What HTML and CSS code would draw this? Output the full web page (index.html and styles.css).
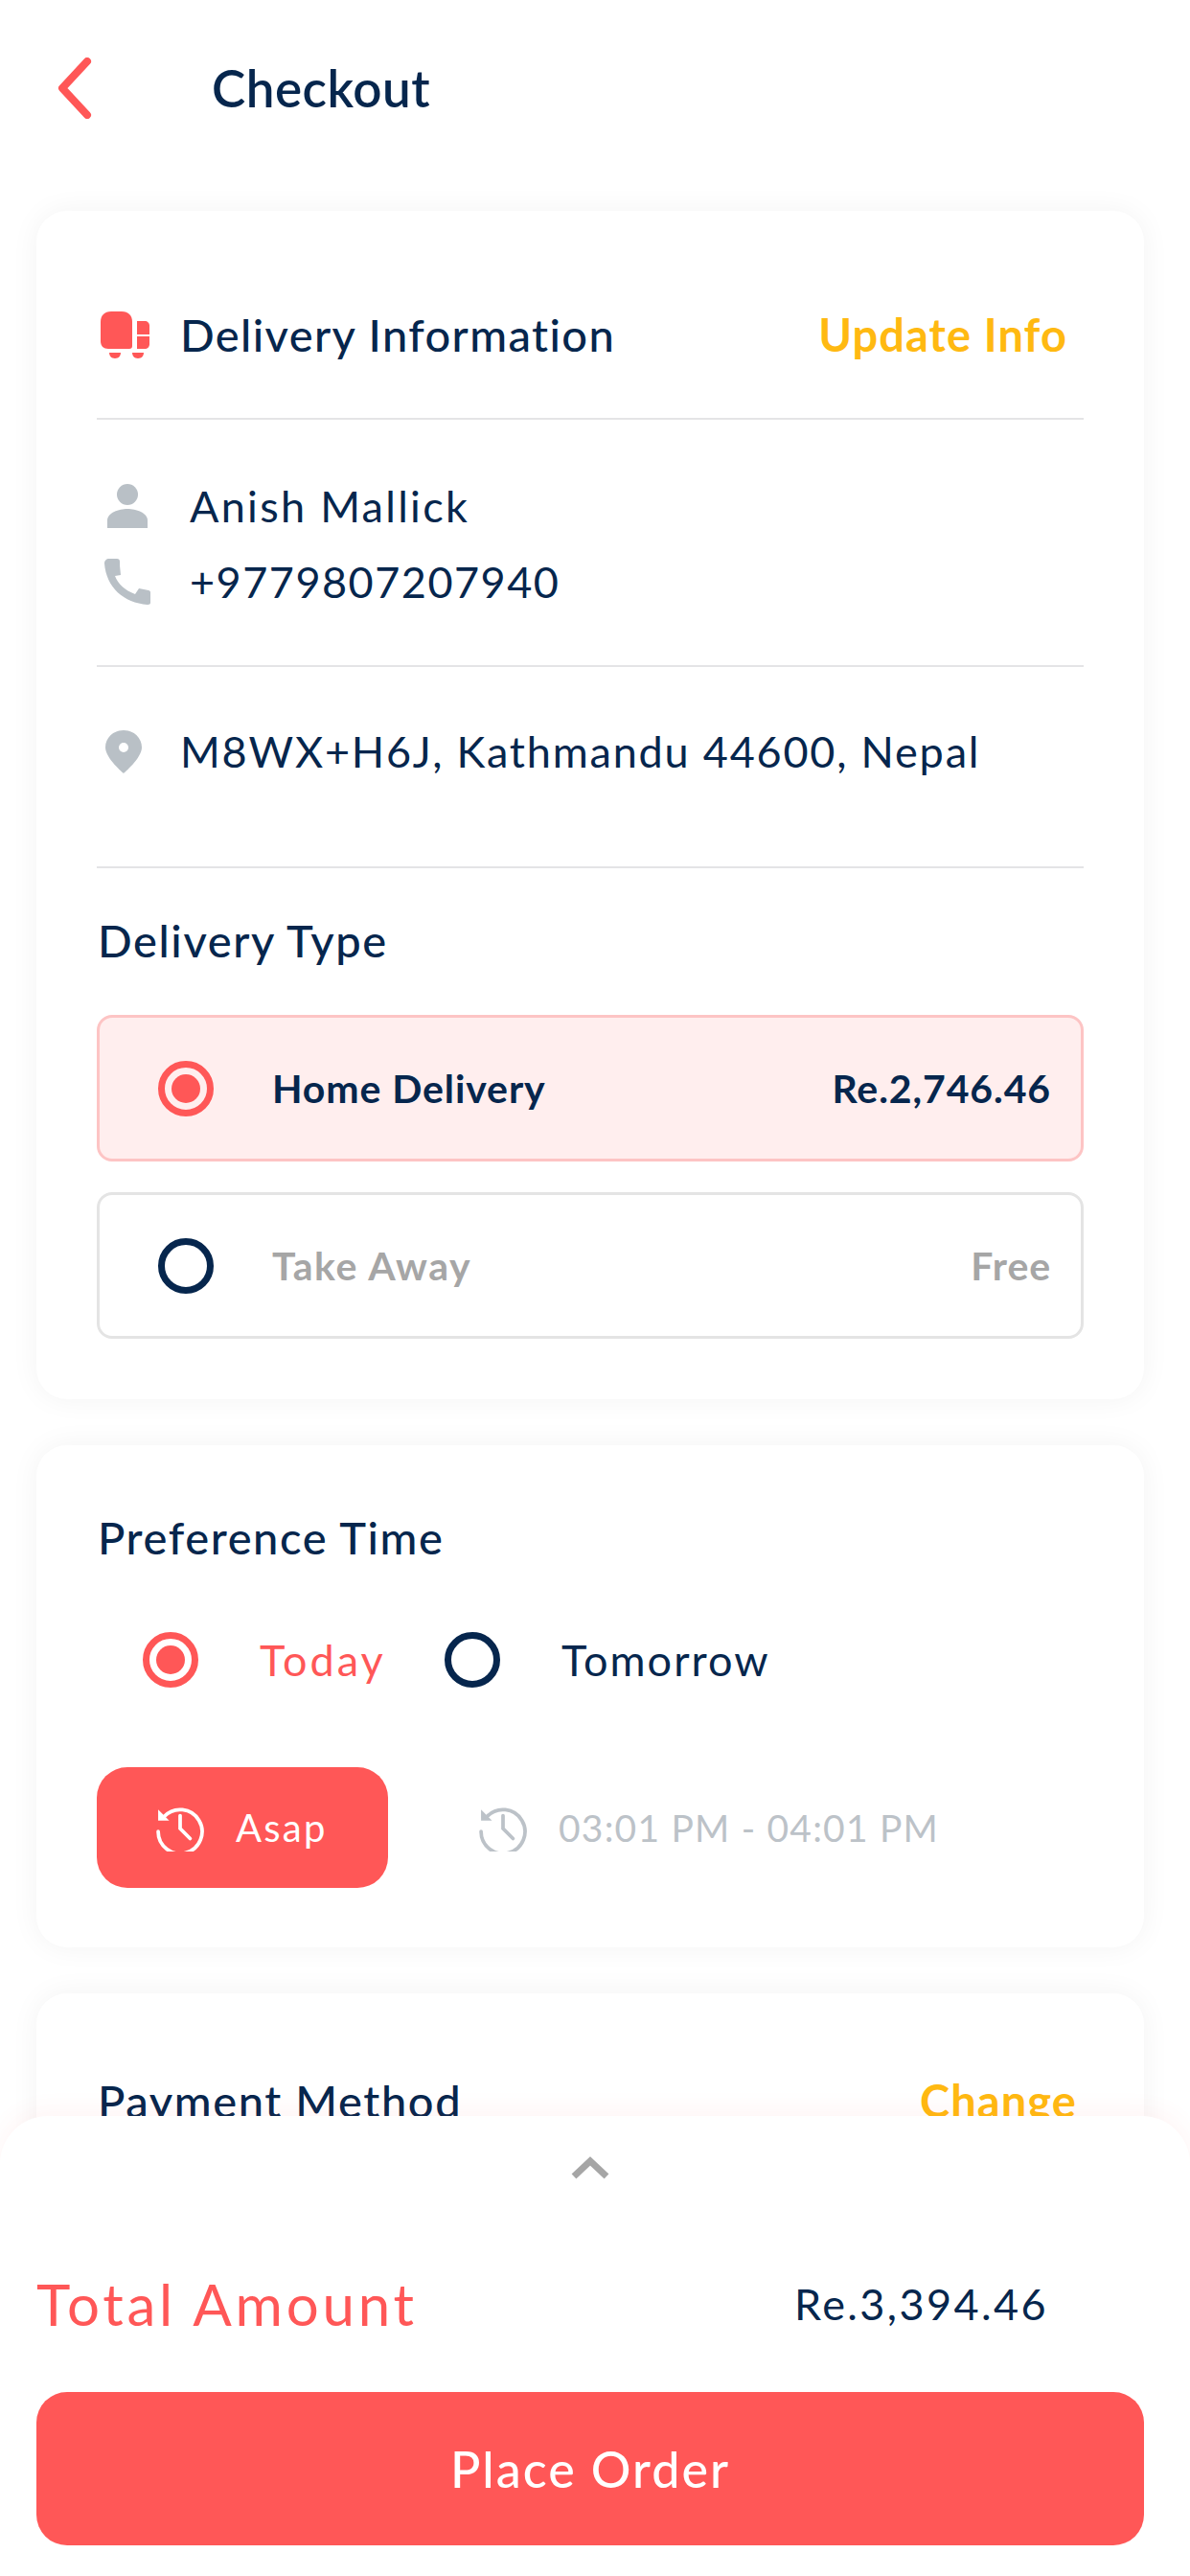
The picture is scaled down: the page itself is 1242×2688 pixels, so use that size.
FILE: index.html
```html
<!DOCTYPE html>
<html lang="en">
<head>
    <meta charset="UTF-8">
    <meta name="viewport" content="width=device-width, initial-scale=1.0">
    <title>Checkout</title>
    <link rel="stylesheet" href="styles.css">
</head>
<body>
    <div class="screen">
        <header class="top-bar">
            <svg class="back-icon" viewBox="0 0 36 64"><path d="M31 4 5 32l26 28" /></svg>
            <h1>Checkout</h1>
        </header>

        <section class="card card-delivery">
            <div class="info-head">
                <svg class="truck-icon" viewBox="0 0 51 49">
                    <path d="M11 0h11c7 0 11 4 11 11v25c0 2-1 3-3 3H8c-5 0-8-3-8-8V11C0 4 4 0 11 0z" />
                    <path d="M38 10h8c3 0 5 2 5 5v9H38z" />
                    <path d="M38 26h13v8c0 3-2 5-5 5h-8z" />
                    <path d="M9 43h12c0 3-2 6-6 6s-6-3-6-6zM33 43h12c0 3-2 6-6 6s-6-3-6-6z" />
                </svg>
                <h2 class="info-title">Delivery Information</h2>
                <a class="link-gold">Update Info</a>
            </div>

            <div class="contact">
                <div class="contact-row">
                    <svg class="gray-icon" viewBox="0 0 48 48">
                        <circle cx="24" cy="12" r="11" />
                        <path d="M3 47v-8c0-8 12-12 21-12s21 4 21 12v8z" />
                    </svg>
                    <span class="contact-name">Anish Mallick</span>
                </div>
                <div class="contact-row">
                    <svg class="gray-icon" viewBox="0 0 48 48">
                        <path d="M0 5c0-3 2-5 5-5h8c2 0 3 1 3 3v4l1 10-6 1c3 8 10 15 21 19l4-6 10 2c1 0 2 1 2 2v11c0 1-1 2-3 2C20 46 2 30 0 5z" />
                    </svg>
                    <span>+9779807207940</span>
                </div>
            </div>

            <div class="address">
                <svg class="pin-icon" viewBox="0 0 38 45">
                    <path fill-rule="evenodd" d="M19 0C8 0 0 8 0 18c0 11 19 27 19 27s19-16 19-27C38 8 30 0 19 0zm0 13a5 5 0 1 1 0 10 5 5 0 0 1 0-10z" />
                </svg>
                <span>M8WX+H6J, Kathmandu 44600, Nepal</span>
            </div>

            <div class="delivery-type">
                <h3 class="section-title">Delivery Type</h3>
                <div class="type-option selected">
                    <span class="radio on"></span>
                    <span class="type-name">Home Delivery</span>
                    <span class="type-price">Re.2,746.46</span>
                </div>
                <div class="type-option">
                    <span class="radio"></span>
                    <span class="type-name">Take Away</span>
                    <span class="type-price">Free</span>
                </div>
            </div>
        </section>

        <section class="card card-time">
            <h3 class="section-title">Preference Time</h3>
            <div class="day-row">
                <span class="radio on"></span>
                <span class="day-name active">Today</span>
                <span class="radio"></span>
                <span class="day-name">Tomorrow</span>
            </div>
            <div class="slot-row">
                <div class="asap-button">
                    <svg class="clock-icon" viewBox="0 0 48 48">
                        <path d="M2 28A22 22 0 1 0 8 13" />
                        <path class="clock-head" d="M2 6v11h11z" />
                        <path d="M24 12v13l10 10" />
                    </svg>
                    <span>Asap</span>
                </div>
                <div class="time-slot">
                    <svg class="clock-icon" viewBox="0 0 48 48">
                        <path d="M2 28A22 22 0 1 0 8 13" />
                        <path class="clock-head" d="M2 6v11h11z" />
                        <path d="M24 12v13l10 10" />
                    </svg>
                    <span>03:01 PM - 04:01 PM</span>
                </div>
            </div>
        </section>

        <section class="card card-payment">
            <div class="payment-head">
                <h3 class="section-title">Payment Method</h3>
                <a class="link-gold">Change</a>
            </div>
        </section>

        <!-- sheet sits over the scrolled content -->
        <div class="bottom-sheet">
            <svg class="sheet-arrow" viewBox="0 0 40 24"><path d="M3 21 20 5l17 16" /></svg>
            <div class="total-row">
                <span class="total-label">Total Amount</span>
                <span class="total-value">Re.3,394.46</span>
            </div>
            <button class="place-order">Place Order</button>
        </div>
    </div>
</body>
</html>
```

FILE: styles.css
```css
* {
    box-sizing: border-box;
}

body {
    margin: 0;
    background-color: #fff;
    font-family: "Lato", "Open Sans", sans-serif;
    color: #06264d;
}

h1, h2, h3 {
    margin: 0;
    font-weight: 500;
}

.screen {
    position: relative;
    width: 1242px;
    height: 2688px;
    padding: 0 48px 0 38px;
    overflow: hidden;
}

.top-bar {
    display: flex;
    align-items: center;
    height: 220px;
    padding: 0 0 37px 22px;
}

.back-icon {
    width: 36px;
    height: 64px;
    fill: none;
    stroke: #ff5757;
    stroke-width: 8;
    stroke-linecap: round;
    stroke-linejoin: round;
}

h1 {
    margin-left: 125px;
    font-size: 53px;
    font-weight: 600;
    letter-spacing: 0.5px;
}

.card {
    margin-bottom: 48px;
    padding: 0 63px;
    background-color: #fff;
    border-radius: 32px;
    box-shadow: 0 0 30px rgba(0, 0, 0, 0.05);
}

.card-delivery {
    height: 1240px;
}

.info-head {
    display: flex;
    align-items: center;
    height: 218px;
    padding: 42px 17px 0 4px;
    border-bottom: 2px solid #e4e4e6;
}

.truck-icon {
    width: 51px;
    height: 49px;
    fill: #ff5757;
}

.info-title {
    margin-left: 32px;
    font-size: 47px;
    letter-spacing: 1.4px;
}

.link-gold {
    margin-left: auto;
    font-size: 47px;
    font-weight: 700;
    letter-spacing: 1.1px;
    color: #ffb911;
}

.contact {
    height: 258px;
    padding-top: 50px;
    border-bottom: 2px solid #e4e4e6;
}

.contact-row {
    display: flex;
    align-items: center;
    height: 79px;
    padding-left: 8px;
    font-size: 45px;
    letter-spacing: 1.5px;
}

.contact-row span {
    margin-left: 41px;
}

.contact-row .contact-name {
    letter-spacing: 2.3px;
}

.gray-icon {
    width: 48px;
    height: 48px;
    fill: #b9c0c6;
}

.address {
    display: flex;
    align-items: center;
    height: 210px;
    padding: 0 0 32px 9px;
    border-bottom: 2px solid #e4e4e6;
    font-size: 45px;
    letter-spacing: 1.8px;
}

.address span {
    margin-left: 40px;
}

.pin-icon {
    width: 38px;
    height: 45px;
    fill: #b9c0c6;
}

.delivery-type {
    padding-top: 50px;
}

.section-title {
    padding-left: 1px;
    font-size: 47px;
    letter-spacing: 1.6px;
    line-height: 50px;
}

.type-option {
    display: flex;
    align-items: center;
    height: 153px;
    margin-top: 32px;
    padding: 0 31px 0 61px;
    border: 3px solid #e4e4e4;
    border-radius: 16px;
    font-size: 41px;
    font-weight: 700;
    letter-spacing: 0.9px;
    color: #a6a6a6;
}

.delivery-type .section-title + .type-option {
    margin-top: 53px;
}

.type-option.selected {
    background-color: #ffeeee;
    border-color: #fdc4c4;
    color: #06264d;
}

.type-name {
    margin-left: 61px;
}

.type-option:not(.selected) .type-name {
    letter-spacing: 1.6px;
}

.type-price {
    margin-left: auto;
}

.radio {
    flex: none;
    display: flex;
    align-items: center;
    justify-content: center;
    width: 58px;
    height: 58px;
    border: 7px solid #06264d;
    border-radius: 50%;
}

.radio.on {
    border-color: #ff5757;
}

.radio.on::after {
    content: "";
    width: 30px;
    height: 30px;
    border-radius: 50%;
    background-color: #ff5757;
}

.card-time {
    height: 524px;
    padding-top: 71px;
}

.day-row {
    display: flex;
    align-items: center;
    margin-top: 74px;
    padding-left: 48px;
    font-size: 45px;
    letter-spacing: 2px;
}

.day-name {
    margin-left: 64px;
}

.day-name.active {
    width: 193px;
    letter-spacing: 3px;
    color: #ff5757;
}

.slot-row {
    display: flex;
    align-items: center;
    margin-top: 83px;
}

.asap-button {
    display: flex;
    align-items: center;
    width: 304px;
    height: 126px;
    padding-left: 62px;
    background-color: #ff5757;
    border-radius: 32px;
    font-size: 40px;
    letter-spacing: 2.2px;
    color: #fff;
}

.asap-button span {
    margin-left: 33px;
}

.clock-icon {
    flex: none;
    width: 50px;
    height: 50px;
    fill: none;
    stroke: currentColor;
    stroke-width: 3.6;
    stroke-linecap: round;
}

.clock-head {
    fill: currentColor;
    stroke: none;
}

.time-slot {
    display: flex;
    align-items: center;
    margin-left: 95px;
    font-size: 39px;
    letter-spacing: 1.2px;
    color: #bcc2c8;
}

.time-slot span {
    margin-left: 33px;
}

.card-payment {
    height: 300px;
    padding-top: 84px;
}

.payment-head {
    display: flex;
    align-items: center;
    justify-content: space-between;
    padding-right: 7px;
}

.bottom-sheet {
    position: absolute;
    left: 0;
    right: 0;
    bottom: 0;
    height: 480px;
    padding: 0 48px 0 38px;
    background-color: #fff;
    border-radius: 50px 50px 0 0;
    box-shadow: 0 -6px 24px rgba(255, 87, 87, 0.06);
}

.sheet-arrow {
    display: block;
    width: 40px;
    height: 24px;
    margin: 42px 0 0 558px;
    fill: none;
    stroke: #a6a6a6;
    stroke-width: 7;
}

.total-row {
    display: flex;
    align-items: center;
    justify-content: space-between;
    height: 80px;
    margin-top: 90px;
    padding-right: 100px;
}

.total-label {
    font-size: 60px;
    letter-spacing: 3.8px;
    color: #ff5757;
}

.total-value {
    font-size: 45px;
    letter-spacing: 2.4px;
}

.place-order {
    display: block;
    width: 100%;
    height: 160px;
    margin-top: 52px;
    border: none;
    border-radius: 32px;
    background-color: #ff5757;
    color: #fff;
    font-family: inherit;
    font-size: 52px;
    font-weight: 500;
    letter-spacing: 2px;
}
```
